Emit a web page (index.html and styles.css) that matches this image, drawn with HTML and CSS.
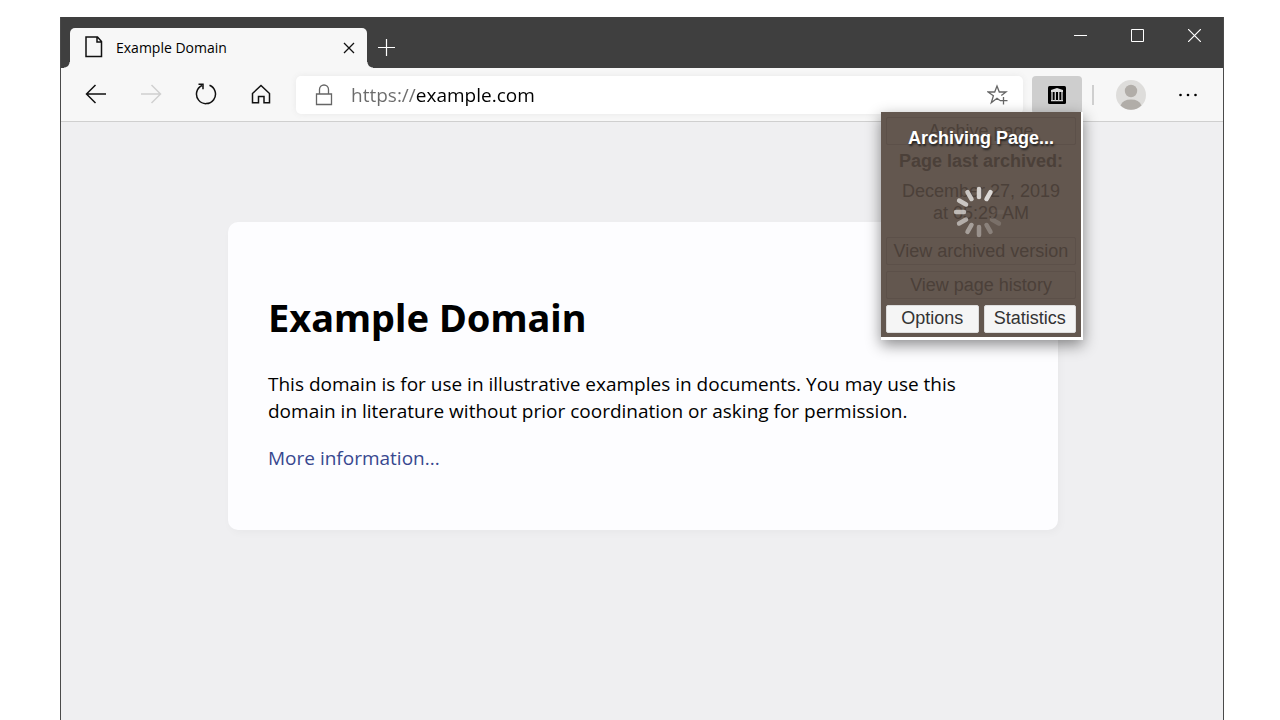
FILE: index.html
```html
<!DOCTYPE html>
<html lang="en">
<head>
<meta charset="utf-8">
<title>Example Domain</title>
<link rel="stylesheet" href="styles.css">
</head>
<body>
<div class="window">
  <header class="titlebar">
    <div class="tab">
      <svg class="page-icon" width="18" height="22" viewBox="0 0 18 22" fill="none" stroke="#111" stroke-width="1.500"><path d="M1 1h11.500l4 4.500v15H1zM12 1v5h4.500"/></svg>
      <span class="tab-title">Example Domain</span>
      <button class="icon-button tab-close" aria-label="Close tab"><svg width="12" height="12" viewBox="0 0 12 12" stroke="#111" stroke-width="1.300"><path d="M1 1l10 10M11 1L1 11"/></svg></button>
    </div>
    <button class="icon-button new-tab" aria-label="New tab"><svg width="17" height="17" viewBox="0 0 17 17" stroke="#fff" stroke-width="1.200"><path d="M8.500 0v17M0 8.500h17"/></svg></button>
    <div class="window-controls">
      <button class="icon-button control" aria-label="Minimize"><svg width="13" height="13" viewBox="0 0 13 13" stroke="#fff"><path d="M0 6.500h13"/></svg></button>
      <button class="icon-button control" aria-label="Maximize"><svg width="13" height="13" viewBox="0 0 13 13" fill="none" stroke="#fff"><path d="M.5.5h12v12H.5z"/></svg></button>
      <button class="icon-button control" aria-label="Close"><svg width="13" height="13" viewBox="0 0 13 13" stroke="#fff" stroke-width="1.200"><path d="M0 0l13 13M13 0L0 13"/></svg></button>
    </div>
  </header>
  <nav class="toolbar">
    <button class="icon-button nav" aria-label="Back"><svg width="22" height="20" viewBox="0 0 22 20" fill="none" stroke="#111" stroke-width="1.500"><path d="M21 10H1.500M10.500 1l-9 9 9 9"/></svg></button>
    <button class="icon-button nav" aria-label="Forward" disabled><svg width="22" height="20" viewBox="0 0 22 20" fill="none" stroke="#d0d0d0" stroke-width="1.500"><path d="M1 10h19.500M11.500 1l9 9-9 9"/></svg></button>
    <button class="icon-button nav" aria-label="Refresh"><svg width="22" height="22" viewBox="0 0 22 22" fill="none" stroke="#111" stroke-width="1.500"><path d="M14.500 2.300A9.500 9.500 0 1 1 7 2.500M3.500 1.300H8v5"/></svg></button>
    <button class="icon-button nav" aria-label="Home"><svg width="20" height="20" viewBox="0 0 20 20" fill="none" stroke="#111" stroke-width="1.500"><path d="M1.500 9.500L10 1.500l8.500 8v9.300H13v-6.300H7.500v6.300h-6z"/></svg></button>
    <div class="address-bar">
      <svg class="lock" width="18" height="22" viewBox="0 0 18 22" fill="none" stroke="#666" stroke-width="1.300"><path d="M1.500 10h15v10.500h-15zM4.500 10V5.500a4.500 4.500 0 0 1 9 0V10"/></svg>
      <input class="address" type="text" aria-label="Address" value="https://example.com">
      <button class="icon-button favorite" aria-label="Add to favorites"><svg width="22" height="22" viewBox="0 0 22 22" fill="none" stroke="#666" stroke-width="1.300"><path d="M13 16.500l-3-2.200-5.700 4.500 2.100-7L1 8h6.700L10 2l2.300 6H19l-4.700 3.500M16.500 13v7.500M13 16.700h7.500"/></svg></button>
    </div>
    <div class="extension">
      <button class="icon-button extension-button" aria-label="Archive"><svg width="18" height="18" viewBox="0 0 18 18"><rect width="18" height="18" rx="1.500"/><path fill="#ddd" d="M3 4L9 2l6 2v2H3zM3 14h12v1.300H3z"/><path fill="none" stroke="#ccc" stroke-width="1.400" d="M4 6v9M7.300 6v9M10.700 6v9M14 6v9"/></svg></button>
      <section class="popup" aria-label="Archive page">
        <div class="popup-body">
          <button class="popup-button faded" disabled>Archive page</button>
          <h2 class="archived-title">Page last archived:</h2>
          <p class="archived-date">December 27, 2019<br>at 05:29 AM</p>
          <button class="popup-button faded" disabled>View archived version</button>
          <button class="popup-button faded" disabled>View page history</button>
          <div class="popup-actions">
            <button class="popup-button">Options</button>
            <button class="popup-button">Statistics</button>
          </div>
          <div class="progress" role="status">
            <strong>Archiving Page...</strong>
            <svg class="spinner" width="56" height="56" viewBox="-28 -28 56 56" stroke="#e4e2e0" stroke-width="4.500" stroke-linecap="round">
              <path d="M0-15v-8" transform="rotate(30)" opacity=".95"/>
              <path d="M0-15v-8" opacity=".88"/>
              <path d="M0-15v-8" transform="rotate(-30)" opacity=".82"/>
              <path d="M0-15v-8" transform="rotate(-60)" opacity=".8"/>
              <path d="M0-15v-8" transform="rotate(-90)" opacity=".72"/>
              <path d="M0-15v-8" transform="rotate(-120)" opacity=".62"/>
              <path d="M0-15v-8" transform="rotate(-150)" opacity=".52"/>
              <path d="M0-15v-8" transform="rotate(180)" opacity=".42"/>
              <path d="M0-15v-8" transform="rotate(150)" opacity=".3"/>
              <path d="M0-15v-8" transform="rotate(120)" opacity=".18"/>
              <path d="M0-15v-8" transform="rotate(90)" opacity=".05"/>
            </svg>
          </div>
        </div>
      </section>
    </div>
    <span class="divider"></span>
    <button class="icon-button profile" aria-label="Profile"><svg width="30" height="30" viewBox="0 0 30 30"><circle cx="15" cy="15" r="15" fill="#dedddb"/><circle cx="15" cy="11" r="6.200" fill="#b1ada8"/><path fill="#b1ada8" d="M4.500 25.500a11 8.500 0 0 1 21 0A15 15 0 0 1 4.500 25.500z"/></svg></button>
    <button class="icon-button more" aria-label="More"><svg width="20" height="4" viewBox="0 0 20 4"><circle cx="2.500" cy="2" r="1.300"/><circle cx="10" cy="2" r="1.300"/><circle cx="17.500" cy="2" r="1.300"/></svg></button>
  </nav>
  <main class="page">
    <article class="card">
      <h1>Example Domain</h1>
      <p>This domain is for use in illustrative examples in documents. You may use this<br>domain in literature without prior coordination or asking for permission.</p>
      <p><a href="#">More information...</a></p>
    </article>
  </main>
</div>
</body>
</html>
```
FILE: styles.css
```css
* { box-sizing: border-box; }
body {
  margin: 0;
  background: #fff;
  color: #000;
  font-family: "Open Sans", "Noto Sans", sans-serif;
}
.window {
  display: flex;
  flex-direction: column;
  min-height: calc(100vh - 17px);
  margin: 17px 56px 0 60px;
  border: solid #4a4a4a;
  border-width: 0 1px;
}
.icon-button {
  display: flex;
  align-items: center;
  justify-content: center;
  flex: none;
  padding: 0;
  border: 0;
  background: none;
}
.titlebar {
  display: flex;
  height: 51px;
  padding: 11px 0 0 9px;
  background: #3f3f3f;
}
.tab {
  position: relative;
  display: flex;
  align-items: center;
  width: 297px;
  padding: 0 12px 2px 15px;
  border-radius: 5px 5px 0 0;
  background: #f7f7f7;
}
.tab::before, .tab::after {
  content: "";
  position: absolute;
  bottom: 0;
  width: 6px;
  height: 6px;
}
.tab::before {
  right: 100%;
  background: radial-gradient(circle at 0 0, #3f3f3f 5px, #f7f7f7 6px);
}
.tab::after {
  left: 100%;
  background: radial-gradient(circle at 100% 0, #3f3f3f 5px, #f7f7f7 6px);
}
.tab-title {
  flex: 1;
  margin-left: 13px;
  font-size: 14px;
}
.tab-close { padding-top: 2px; }
.new-tab { width: 38px; padding-bottom: 2px; }
.window-controls {
  display: flex;
  height: 36px;
  margin: -11px 0 0 auto;
}
.control { width: 57px; }
.toolbar {
  display: flex;
  align-items: center;
  height: 54px;
  padding: 0 8px 0 7px;
  border-bottom: 1px solid #cfcfcf;
  background: #f7f7f7;
}
.nav { width: 55px; height: 38px; padding-bottom: 2px; }
.address-bar {
  display: flex;
  align-items: center;
  flex: 1;
  min-width: 0;
  height: 38px;
  margin: 0 9px 0 8px;
  padding: 0 14px 0 19px;
  border-radius: 5px;
  background: #fff;
  box-shadow: 0 0 6px #e9e9e9;
}
.address {
  flex: 1;
  min-width: 0;
  margin-left: 18px;
  padding: 0;
  border: 0;
  font: 19px/30px "Open Sans", "Noto Sans", sans-serif;
  color: transparent;
  background: linear-gradient(to right, #6b6b6b 65px, #000 65px);
  background-clip: text;
  -webkit-background-clip: text;
}
.extension {
  position: relative;
  align-self: stretch;
  display: flex;
  align-items: center;
}
.extension-button {
  width: 50px;
  height: 38px;
  border-radius: 4px;
  background: #cecece;
}
.divider {
  width: 2px;
  height: 20px;
  margin: 0 22px 0 10px;
  background: #cfcfcf;
}
.more { width: 54px; height: 38px; margin-left: 15px; }
.popup {
  position: absolute;
  top: 44px;
  right: -1px;
  width: 202px;
  padding: 0 2px 3px 0;
  background: #fff;
  box-shadow: 0 5px 14px rgba(0, 0, 0, .45);
  font: 18px/22px "Liberation Sans", Arial, sans-serif;
  text-align: center;
}
.popup-body {
  position: relative;
  display: flex;
  flex-direction: column;
  padding: 5px 5px 4px;
  background: #63574f;
  color: #4b4039;
}
.popup-button {
  flex: 1;
  height: 28px;
  padding: 0 0 2px;
  border: 1px solid #ddd;
  border-radius: 2px;
  background: #f5f5f5;
  color: #333;
  font: inherit;
  white-space: nowrap;
}
.faded {
  flex: none;
  margin-bottom: 6px;
  padding: 0;
  border-color: #5c5049;
  background: #63574f;
  color: #4b4039;
}
.archived-title {
  margin: -1px 0 8px;
  font-size: 18px;
}
.archived-date { margin: 0 0 13px; }
.popup-actions { display: flex; gap: 5px; }
.progress {
  position: absolute;
  top: 15px;
  left: 0;
  right: 0;
  color: #fff;
  text-shadow: 1px 2px 2px #222;
}
.spinner { display: block; margin: 35px auto 0 70px; }
.page {
  flex: 1;
  padding: 100px 20px 100px 22px;
  background: #efeff1;
}
.card {
  max-width: 830px;
  margin: 0 auto;
  padding: 68px 40px 58px;
  border-radius: 10px;
  background: #fdfdff;
  box-shadow: 2px 3px 8px rgba(0, 0, 0, .03);
}
h1 {
  margin: 0 0 27px;
  font-family: "Noto Sans", "Open Sans", sans-serif;
  font-size: 38px;
  line-height: 54px;
}
.card p {
  margin: 0 0 20px;
  font-size: 19px;
  line-height: 27px;
}
.card p:last-child { margin: 0; }
.card a { color: #38488f; text-decoration: none; }
```
